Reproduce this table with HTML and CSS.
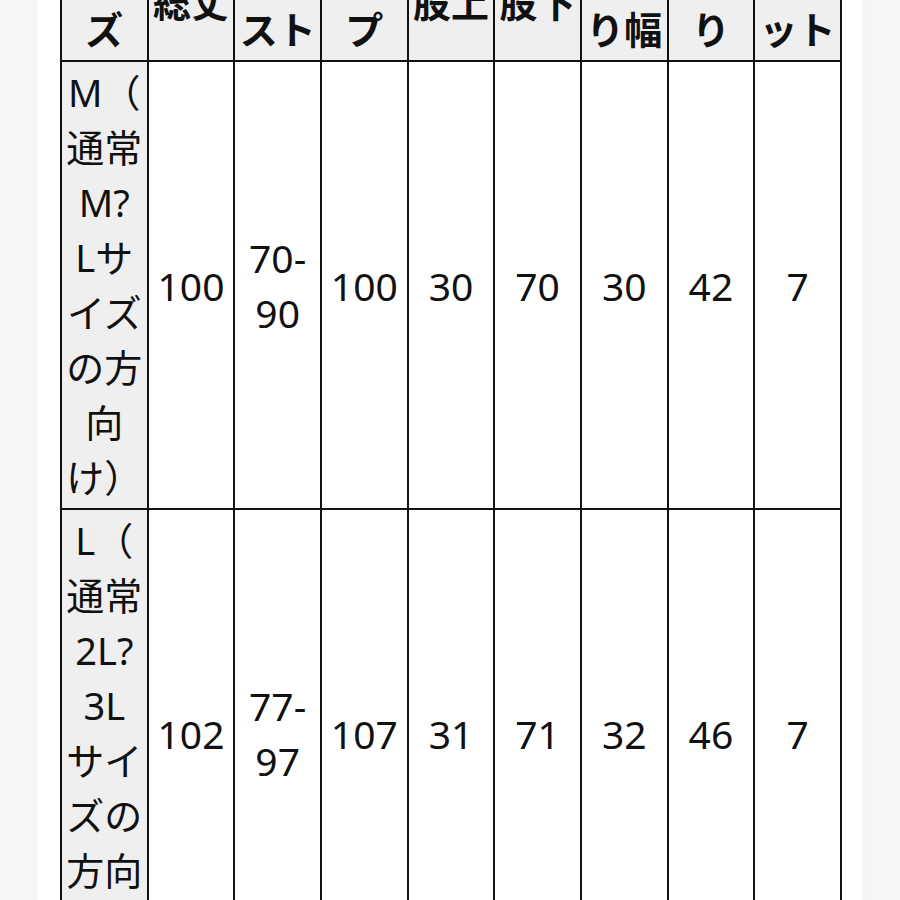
FILE: index.html
```html
<!DOCTYPE html>
<html lang="ja">
<head>
<meta charset="utf-8">
<title>サイズ表</title>
<link rel="stylesheet" href="styles.css">
</head>
<body>
<div class="page">
  <table class="size-table">
    <colgroup>
      <col><col><col><col><col><col><col><col><col>
    </colgroup>
    <thead>
      <tr>
        <th>サイ<br>ズ</th>
        <th>総丈</th>
        <th>ウエ<br>スト</th>
        <th>ヒッ<br>プ</th>
        <th>股上</th>
        <th>股下</th>
        <th>わた<br>り幅</th>
        <th>裾周<br>り</th>
        <th>ポケ<br>ット</th>
      </tr>
    </thead>
    <tbody>
      <tr>
        <th class="size">M（<br>通常<br>M?<br>Lサ<br>イズ<br>の方<br>向<br>け）</th>
        <td>100</td>
        <td>70-<br>90</td>
        <td>100</td>
        <td>30</td>
        <td>70</td>
        <td>30</td>
        <td>42</td>
        <td>7</td>
      </tr>
      <tr>
        <th class="size">L（<br>通常<br>2L?<br>3L<br>サイ<br>ズの<br>方向<br>け）</th>
        <td>102</td>
        <td>77-<br>97</td>
        <td>107</td>
        <td>31</td>
        <td>71</td>
        <td>32</td>
        <td>46</td>
        <td>7</td>
      </tr>
    </tbody>
  </table>
</div>
</body>
</html>
```
FILE: styles.css
```css
html, body {
  margin: 0;
  padding: 0;
}
body {
  background: #f6f6f6;
  font-family: "Noto Sans", "Noto Sans CJK JP", sans-serif;
  color: #111;
  overflow: hidden;
}
.page {
  margin: 0 37px;
  padding: 0 22px 0 23px;
  background: #fff;
  min-height: 1400px;
  box-shadow: 0 0 6px rgba(0, 0, 0, 0.03);
}
.size-table {
  border-collapse: collapse;
  table-layout: fixed;
  width: 780px;
  margin-top: -58px;
  font-size: 38px;
  line-height: 55px;
}
.size-table col {
  width: 86.66px;
}
.size-table th,
.size-table td {
  border: 2px solid #111;
  padding: 3px 3px;
  text-align: center;
  vertical-align: middle;
  white-space: nowrap;
}
.size-table thead th {
  background: #efefef;
  font-weight: 700;
}
.size-table tbody th.size {
  background: #efefef;
  font-weight: 400;
}
.size-table td {
  background: #fff;
  font-weight: 400;
  font-size: 39px;
}
```
